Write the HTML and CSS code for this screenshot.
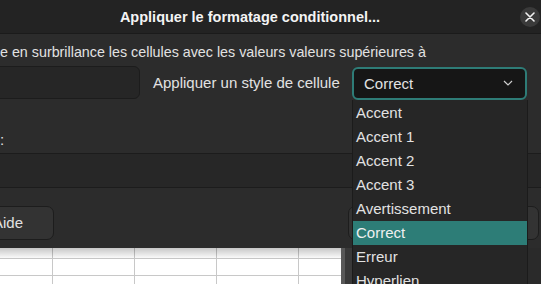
FILE: index.html
```html
<!DOCTYPE html>
<html lang="fr">
<head>
<meta charset="utf-8">
<link rel="stylesheet" href="styles.css">
</head>
<body>
<div class="screen">
  <div class="dialog">
    <div class="titlebar">
      <div class="title">Appliquer le formatage conditionnel...</div>
      <div class="close">
        <svg width="10" height="10" viewBox="0 0 10 10"><path d="M1 1L9 9M9 1L1 9" stroke="#f2f2f2" stroke-width="1.6" stroke-linecap="round"/></svg>
      </div>
    </div>
    <div class="content">
      <div class="line intro">e en surbrillance les cellules avec les valeurs valeurs supérieures à</div>
      <div class="row">
        <div class="entry"></div>
        <div class="label">Appliquer un style de cellule</div>
        <div class="combo">
          <span>Correct</span>
          <svg width="10" height="6" viewBox="0 0 10 6"><path d="M1 1L5 5L9 1" fill="none" stroke="#cfcfcf" stroke-width="1.2"/></svg>
        </div>
      </div>
      <div class="line colon">:</div>
      <div class="band"></div>
      <div class="buttons">
        <div class="btn help">Aide</div>
        <div class="btn wide"></div>
      </div>
    </div>
  </div>
  <div class="below">
    <div class="sheet"></div>
    <div class="strip"></div>
    <div class="dark"></div>
  </div>
  <ul class="popup">
    <li>Accent</li>
    <li>Accent 1</li>
    <li>Accent 2</li>
    <li>Accent 3</li>
    <li>Avertissement</li>
    <li class="sel">Correct</li>
    <li>Erreur</li>
    <li>Hyperlien</li>
  </ul>
</div>
</body>
</html>
```
FILE: styles.css
```css
html, body {
  margin: 0;
  padding: 0;
  background: #2a2a2a;
}
.screen {
  position: relative;
  width: 541px;
  height: 284px;
  overflow: hidden;
  font-family: "Liberation Sans", "Noto Sans", sans-serif;
  font-size: 15px;
  color: #e2e2e2;
}
.dialog {
  width: 541px;
  height: 248px;
  background: #2c2c2c;
  display: flex;
  flex-direction: column;
}
.titlebar {
  height: 33px;
  background: #232323;
  border-bottom: 1px solid #1b1b1b;
  display: flex;
  align-items: center;
}
.title {
  width: 500px;
  text-align: center;
  font-weight: bold;
  font-size: 14.5px;
  color: #f4f4f4;
}
.close {
  margin-left: auto;
  margin-right: 1px;
  width: 20px;
  height: 20px;
  border-radius: 50%;
  background: #3a3a3a;
  display: flex;
  align-items: center;
  justify-content: center;
}
.close svg { display: block; }
.content {
  display: flex;
  flex-direction: column;
}
.line {
  height: 20px;
  line-height: 20px;
  margin-top: 8px;
  white-space: nowrap;
}
.intro {
  font-size: 14.3px;
}
.row {
  margin-top: 4px;
  height: 33px;
  display: flex;
  align-items: center;
}
.entry {
  margin-left: -10px;
  width: 148px;
  height: 31px;
  background: #262626;
  border: 1px solid #1c1c1c;
  border-radius: 6px;
}
.label {
  margin-left: 13px;
  white-space: nowrap;
}
.combo {
  margin-left: auto;
  margin-right: 14px;
  width: 171px;
  height: 29px;
  margin-top: 1px;
  box-sizing: content-box;
  border: 2px solid #2e7c77;
  border-radius: 6px;
  background: #161616;
  display: flex;
  align-items: center;
  padding: 0;
}
.combo span {
  margin-left: 10px;
}
.combo svg {
  margin-left: auto;
  margin-right: 12px;
  display: block;
}
.colon {
  margin-top: 31px;
}
.band {
  margin-top: 3px;
  height: 33px;
  background: #272727;
  border-top: 1px solid #1c1c1c;
  border-bottom: 1px solid #1c1c1c;
}
.buttons {
  margin-top: 18px;
  display: flex;
}
.btn {
  height: 32px;
  line-height: 32px;
  border: 1px solid #1d1d1d;
  border-radius: 7px;
  background: #333333;
  text-align: center;
}
.help {
  margin-left: -38px;
  width: 90px;
}
.wide {
  margin-left: auto;
  margin-right: 2px;
  width: 189px;
}
.below {
  display: flex;
  height: 36px;
}
.sheet {
  width: 341px;
  background-color: #ffffff;
  background-image:
    linear-gradient(to bottom, rgba(0,0,0,0.22), rgba(0,0,0,0) 11px),
    linear-gradient(to right, transparent 52px, #c8c8c8 52px, #c8c8c8 53px, transparent 53px, transparent 134px, #c8c8c8 134px, #c8c8c8 135px, transparent 135px, transparent 216px, #c8c8c8 216px, #c8c8c8 217px, transparent 217px, transparent 298px, #c8c8c8 298px, #c8c8c8 299px, transparent 299px),
    linear-gradient(to bottom, transparent 10px, #c8c8c8 10px, #c8c8c8 11px, transparent 11px, transparent 27px, #c8c8c8 27px, #c8c8c8 28px, transparent 28px);
}
.strip {
  width: 4px;
  background: #585858;
}
.dark {
  flex: 1;
  background: #2a2a2a;
  border-left: 7px solid #393939;
}
.popup {
  position: absolute;
  left: 352px;
  top: 100px;
  width: 174px;
  margin: 0;
  padding: 0;
  list-style: none;
  background: #262626;
  border: 1px solid #1b1b1b;
  border-top: 0;
}
.popup li {
  height: 24px;
  line-height: 24px;
  padding-left: 3px;
  white-space: nowrap;
}
.popup li:first-child {
  margin-top: 1px;
}
.popup li.sel {
  background: #2d7d77;
  color: #f0f0f0;
}
```
